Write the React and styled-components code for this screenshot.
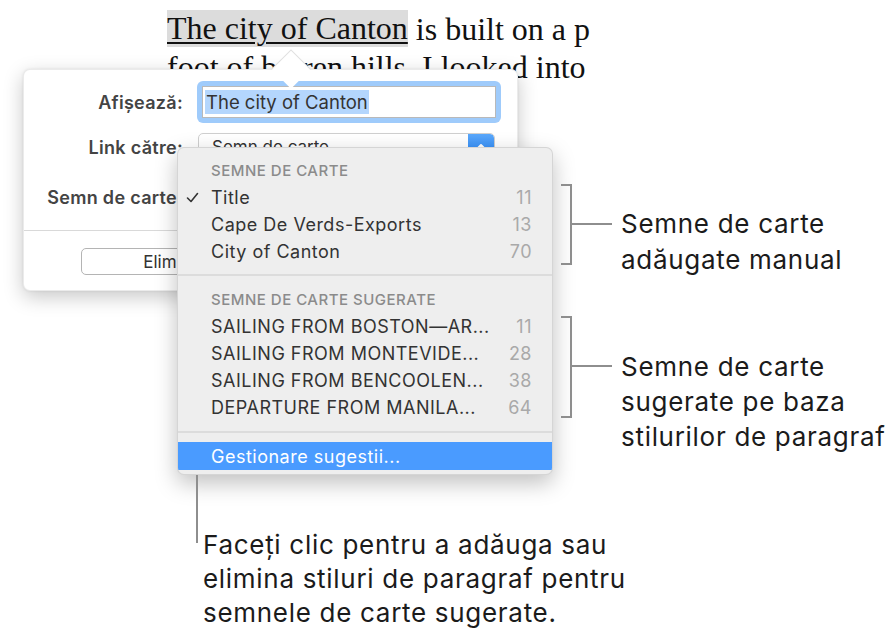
import React from 'react'
import styled, { createGlobalStyle } from 'styled-components'

const GlobalStyle = createGlobalStyle`
  html, body {
    margin: 0;
    padding: 0;
    background: #ffffff;
    overflow: hidden;
  }
  * { box-sizing: border-box; }
`

const UI = `"Inter", "Roboto", "Noto Sans", "Liberation Sans", sans-serif`

const Canvas = styled.div`
  position: relative;
  width: 896px;
  height: 633px;
  overflow: hidden;
  background: #fff;
  font-family: ${UI};
`

const DocText = styled.div`
  width: 590px;
  padding: 10px 0 0 167px;
  overflow: hidden;
  font-family: "Liberation Serif", "Times New Roman", serif;
  font-size: 32px;
  color: #111;
`
const DocLine = styled.div`
  height: 38px;
  line-height: 38px;
  white-space: nowrap;
`
const Linked = styled.span`
  display: inline-block;
  height: 37px;
  line-height: 37px;
  vertical-align: top;
  background: #dcdcdc;
  text-decoration: underline;
  text-decoration-thickness: 2px;
  text-underline-offset: 3px;
`

const Popover = styled.div`
  position: absolute;
  left: 23px;
  top: 69px;
  width: 495px;
  height: 222px;
  background: #fff;
  border-radius: 7px;
  border: 1px solid rgba(0, 0, 0, 0.08);
  box-shadow: 0 6px 20px rgba(0, 0, 0, 0.22), 0 0 3px rgba(0, 0, 0, 0.08);
  padding-top: 11px;
`
const Arrow = styled.div`
  position: absolute;
  left: 253px;
  top: -15px;
  width: 28px;
  height: 28px;
  background: #fff;
  transform: rotate(45deg);
  border-top: 1px solid rgba(0, 0, 0, 0.12);
  border-left: 1px solid rgba(0, 0, 0, 0.12);
`
const FieldRow = styled.div`
  display: flex;
  align-items: center;
  height: ${p => p.h}px;
`
const Label = styled.div`
  width: 159px;
  text-align: right;
  font-size: 18px;
  font-weight: 600;
  letter-spacing: 0.3px;
  color: #444;
  margin-right: 14px;
  white-space: nowrap;
`
const FocusRing = styled.div`
  width: 304px;
  height: 42px;
  border-radius: 6px;
  background: #9fcbfb;
  padding: 5px;
`
const TextField = styled.div`
  height: 32px;
  background: #fff;
  border: 1px solid #b9b9b9;
  padding: 3px 2px;
  display: flex;
  align-items: center;
`
const Selected = styled.span`
  background: #b4d6fd;
  color: #333;
  font-size: 18.5px;
  line-height: 24px;
  padding: 0 1px;
`
const PopupButton = styled.div`
  width: 297px;
  height: 28px;
  margin-left: 1px;
  border: 1px solid #cfcfcf;
  border-radius: 5px;
  display: flex;
  align-items: center;
  justify-content: space-between;
  font-size: 17px;
  color: #333;
  padding-left: 13px;
  overflow: hidden;
`
const PopupArrow = styled.div`
  width: 26px;
  align-self: stretch;
  background: linear-gradient(#5aa8fb, #1f7ff5);
  display: flex;
  align-items: center;
  justify-content: center;
  border-radius: 0 4px 4px 0;
`
const Divider = styled.div`
  height: 1px;
  background: #d9d9d9;
  margin-top: 7px;
`
const Footer = styled.div`
  padding: 17px 0 0 57px;
`
const Button = styled.div`
  width: 214px;
  height: 27px;
  border: 1px solid #b4b4b4;
  border-radius: 5px;
  background: #fff;
  display: flex;
  align-items: center;
  justify-content: center;
  font-size: 17px;
  color: #333;
`

const Menu = styled.div`
  position: absolute;
  left: 177px;
  top: 147px;
  width: 376px;
  height: 328px;
  background: #eeeeee;
  border-radius: 7px;
  border: 1px solid rgba(0, 0, 0, 0.1);
  box-shadow: 0 8px 22px rgba(0, 0, 0, 0.25);
  padding-top: 8px;
  overflow: hidden;
`
const MenuHeader = styled.div`
  height: ${p => p.h}px;
  display: flex;
  align-items: center;
  padding-left: 33px;
  font-size: 15px;
  font-weight: 500;
  letter-spacing: 0.5px;
  color: #8b8b8b;
`
const MenuItem = styled.div`
  height: ${p => (p.h ? p.h : 27)}px;
  display: flex;
  align-items: center;
  padding: 0 20px 0 8px;
  font-size: 18px;
  color: ${p => (p.active ? '#fff' : '#333')};
  background: ${p => (p.active ? '#4a9bff' : 'transparent')};
  letter-spacing: 0.5px;
`
const Check = styled.span`
  width: 25px;
  display: flex;
  align-items: center;
`
const ItemText = styled.span`
  flex: 1;
  white-space: nowrap;
`
const Count = styled.span`
  color: #a9a9a9;
`
const MenuSeparator = styled.div`
  height: ${p => p.h}px;
  display: flex;
  align-items: center;
  &::after {
    content: '';
    flex: 1;
    height: 2px;
    background: #dcdcdc;
  }
`

const Callout = styled.div`
  position: absolute;
  left: ${p => p.x}px;
  top: ${p => p.y}px;
  display: flex;
  align-items: flex-start;
`
const Bracket = styled.div`
  width: 11px;
  height: ${p => p.h}px;
  border: 2px solid #8e8e8e;
  border-left: none;
`
const Connector = styled.div`
  width: 40px;
  height: 2px;
  background: #8e8e8e;
  margin-top: ${p => p.offset}px;
`
const Note = styled.div`
  margin-left: ${p => (p.gap ? p.gap : 9)}px;
  margin-top: ${p => p.offset}px;
  font-size: 26px;
  letter-spacing: 0.7px;
  line-height: ${p => p.lh}px;
  color: #1b1b1b;
  white-space: nowrap;
`
const Leader = styled.div`
  width: 2px;
  height: 68px;
  background: #8e8e8e;
`
const BottomNote = styled.div`
  position: absolute;
  left: 196px;
  top: 475px;
  display: flex;
  align-items: flex-start;
`

const bookmarks = [
  { name: 'Title', n: 11, checked: true },
  { name: 'Cape De Verds-Exports', n: 13 },
  { name: 'City of Canton', n: 70 },
]
const suggested = [
  { name: 'SAILING FROM BOSTON—AR...', n: 11 },
  { name: 'SAILING FROM MONTEVIDE...', n: 28 },
  { name: 'SAILING FROM BENCOOLEN...', n: 38 },
  { name: 'DEPARTURE FROM MANILA...', n: 64 },
]

const CheckIcon = () => (
  <svg width="13" height="11" viewBox="0 0 13 11">
    <polyline points="1.5,6 5,9.5 11.5,1.5" fill="none" stroke="#333" strokeWidth="1.6" strokeLinecap="round" strokeLinejoin="round" />
  </svg>
)

const ChevronUp = () => (
  <svg width="12" height="8" viewBox="0 0 12 8">
    <polyline points="1.5,6.5 6,2 10.5,6.5" fill="none" stroke="#fff" strokeWidth="2" strokeLinecap="round" strokeLinejoin="round" />
  </svg>
)

const App = () => {
  return (
    <Canvas>
      <GlobalStyle />
      <DocText>
        <DocLine><Linked>The city of Canton</Linked> is built on a plain at the</DocLine>
        <DocLine>foot of barren hills. I looked into</DocLine>
      </DocText>

      <Popover>
        <Arrow />
        <FieldRow h={42}>
          <Label>Afișează:</Label>
          <FocusRing>
            <TextField><Selected>The city of Canton</Selected></TextField>
          </FocusRing>
        </FieldRow>
        <FieldRow h={48}>
          <Label>Link către:</Label>
          <PopupButton>
            Semn de carte
            <PopupArrow><ChevronUp /></PopupArrow>
          </PopupButton>
        </FieldRow>
        <FieldRow h={52}>
          <Label>Semn de carte:</Label>
        </FieldRow>
        <Divider />
        <Footer>
          <Button>Elimină link</Button>
        </Footer>
      </Popover>

      <Menu>
        <MenuHeader h={28}>SEMNE DE CARTE</MenuHeader>
        {bookmarks.map(b => (
          <MenuItem key={b.name}>
            <Check>{b.checked && <CheckIcon />}</Check>
            <ItemText>{b.name}</ItemText>
            <Count>{b.n}</Count>
          </MenuItem>
        ))}
        <MenuSeparator h={20} />
        <MenuHeader h={28}>SEMNE DE CARTE SUGERATE</MenuHeader>
        {suggested.map(s => (
          <MenuItem key={s.name}>
            <Check />
            <ItemText>{s.name}</ItemText>
            <Count>{s.n}</Count>
          </MenuItem>
        ))}
        <MenuSeparator h={21} />
        <MenuItem active h={28}>
          <Check />
          <ItemText>Gestionare sugestii...</ItemText>
        </MenuItem>
      </Menu>

      <Callout x={561} y={184}>
        <Bracket h={81} />
        <Connector offset={39} />
        <Note offset={22} lh={36}>Semne de carte<br />adăugate manual</Note>
      </Callout>

      <Callout x={561} y={316}>
        <Bracket h={102} />
        <Connector offset={49} />
        <Note offset={33} lh={35}>Semne de carte<br />sugerate pe baza<br />stilurilor de paragraf</Note>
      </Callout>

      <BottomNote>
        <Leader />
        <Note offset={53} lh={34} gap={5}>
          Faceți clic pentru a adăuga sau<br />elimina stiluri de paragraf pentru<br />semnele de carte sugerate.
        </Note>
      </BottomNote>
    </Canvas>
  )
}

export default App
